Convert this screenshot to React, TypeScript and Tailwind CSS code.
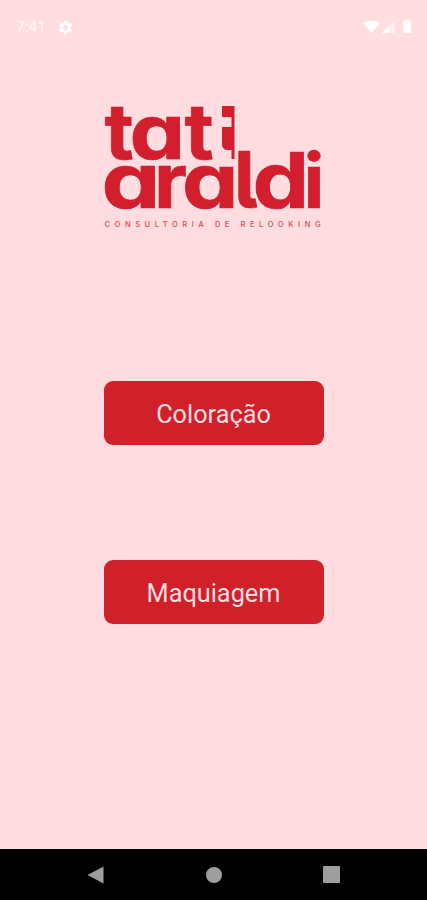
import { MdSettings } from "react-icons/md";

const options = ["Coloração", "Maquiagem"];

// position and horizontal/vertical stretch of every letter in the wordmark
const letters = [
  { char: "t", x: 104.5, y: 158.5, stretch: "1.05 1.01" },
  { char: "a", x: 129.5, y: 158.5, stretch: "1.16 1" },
  { char: "t", x: 184.5, y: 158.5, stretch: "1.05 1.01" },
  { char: "a", x: 101.5, y: 207.5, stretch: "1.23 1" },
  { char: "r", x: 154, y: 207.5, stretch: "1.06 1" },
  { char: "a", x: 182, y: 207.5, stretch: "1.18 1" },
  { char: "l", x: 234, y: 207.5, stretch: "1 1.03" },
  { char: "d", x: 252.5, y: 207.5, stretch: "1.18 1.02" },
  { char: "i", x: 303.5, y: 207.5, stretch: "1.02 1" },
];

function StatusBar() {
  return (
    <div className="flex h-[54px] items-center justify-between pr-[14px] pl-4 text-white">
      <div className="flex items-center gap-[11px]">
        <span className="pt-px text-[15.5px] leading-none opacity-90">7:41</span>
        <MdSettings size={17} />
      </div>
      <svg width="50" height="16" viewBox="0 0 50 16" fill="currentColor">
        <path d="M0 4Q8 -1 17 4L8.500 14Z" />
        <path d="M19 14L32 1V14Z" opacity="0.5" />
        <path d="M19 14L26 7V14Z" />
        <path d="M40 2h2V0.500h4V2h2v12h-8Z" />
      </svg>
    </div>
  );
}

function Logo() {
  return (
    <svg
      className="h-[130px] w-[220px] overflow-visible font-['Inter'] text-[#d31f2d]"
      viewBox="104 100 220 130"
      fill="currentColor"
    >
      <g
        className="text-[76px] font-bold"
        style={{ fontFeatureSettings: '"cv11", "cv05"' }}
        stroke="currentColor"
        strokeWidth="0.7"
      >
        {letters.map(({ char, x, y, stretch }) => (
          <text key={`${x}-${y}`} transform={`translate(${x} ${y}) scale(${stretch})`}>
            {char}
          </text>
        ))}
      </g>
      <path d="M222 106h12.500v53h-3v-9h-3.500q-6 0-6-6v-17h9.500v-10h-9.500Z" />
      <text
        className="text-[7.500px] font-medium"
        x="104.500"
        y="227"
        textLength="216"
        opacity="0.8"
      >
        CONSULTORIA DE RELOOKING
      </text>
    </svg>
  );
}

function NavigationBar() {
  return (
    <nav className="flex h-[51px] items-center justify-between bg-black pr-[87px] pl-[87px] text-[#9e9e9e]">
      <svg width="17" height="18" viewBox="0 0 17 18" fill="currentColor">
        <path d="M16.500 0.500v17L0.500 9Z" />
      </svg>
      <span className="size-4 rounded-full bg-current" />
      <span className="size-[17px] rounded-[1px] bg-current" />
    </nav>
  );
}

export default function App() {
  return (
    <div className="flex h-[900px] w-full flex-col overflow-hidden bg-[#ffdde1] font-['Roboto',sans-serif]">
      <StatusBar />
      <main className="flex flex-1 flex-col items-center pt-[46px]">
        <Logo />
        <div className="mt-[151px] flex flex-col gap-[115px]">
          {options.map((label) => (
            <button
              key={label}
              type="button"
              className="h-16 w-[220px] rounded-[9px] bg-[#d0202a] pt-[3px] text-[25.3px] text-[#ffdde1]"
            >
              {label}
            </button>
          ))}
        </div>
      </main>
      <NavigationBar />
    </div>
  );
}
